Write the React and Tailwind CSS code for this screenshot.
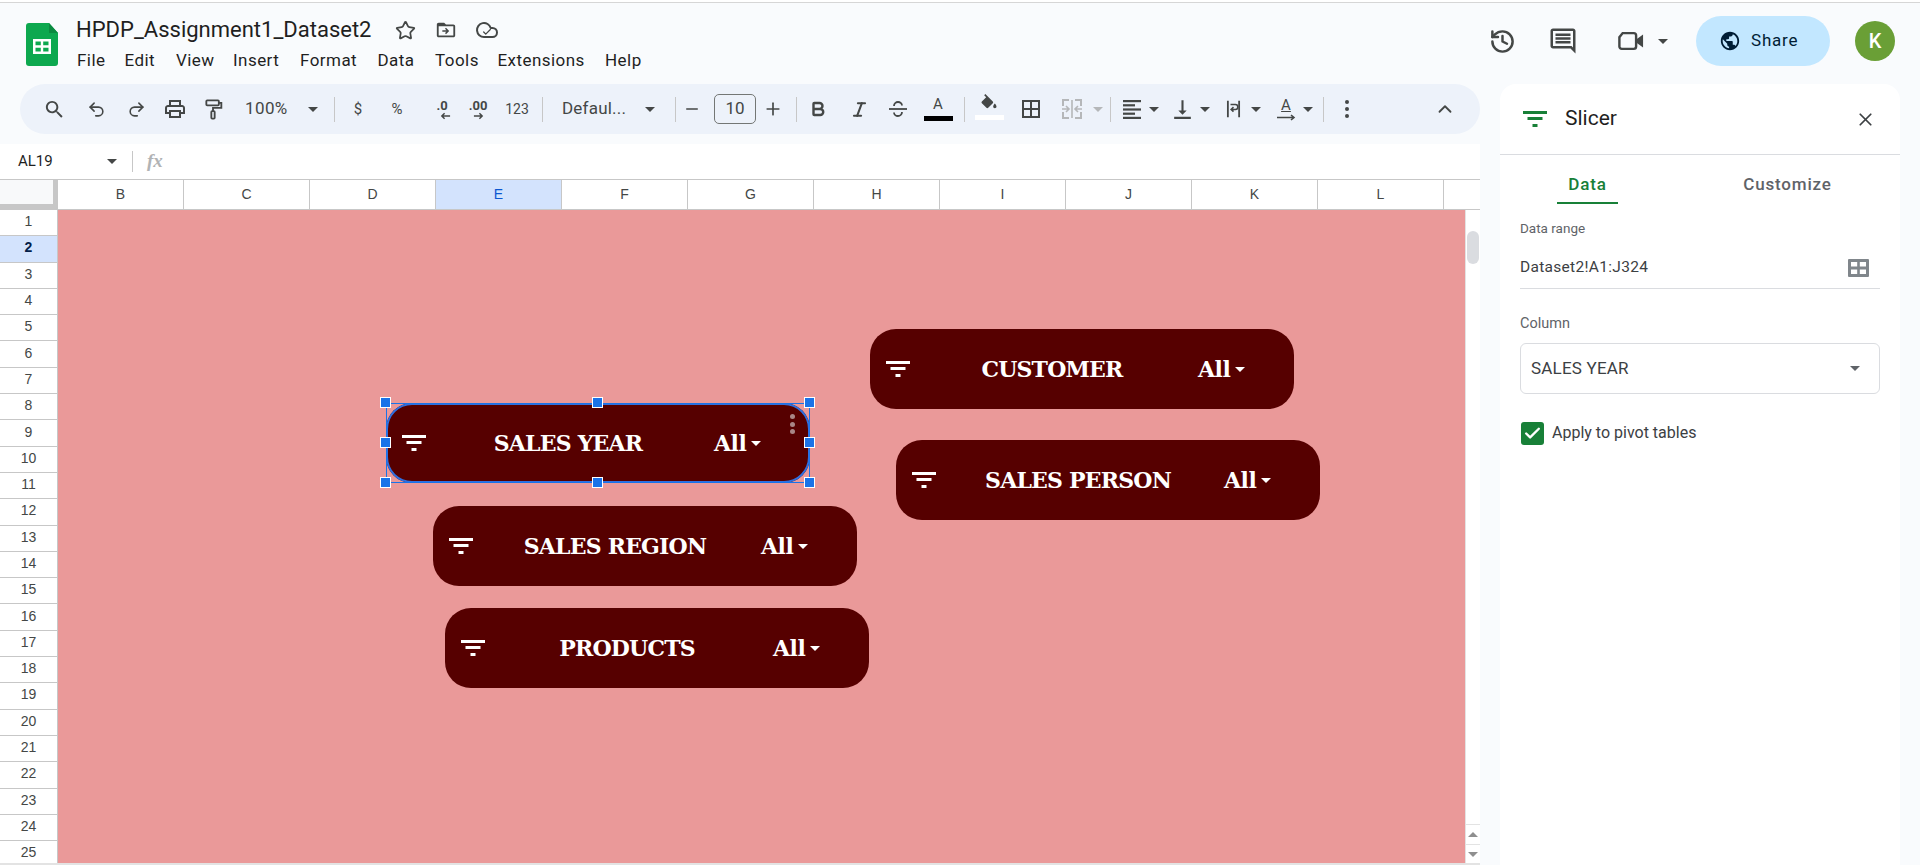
import React from "react";
import {
  Undo2,
  Redo2,
  Star,
  Cloud,
  ChevronUp,
  X,
  Check,
  History,
  Italic,
  Bold,
  Minus,
  Plus,
} from "lucide-react";

const ROBOTO = "font-['Roboto',sans-serif]";
const ARIAL = "font-['Liberation_Sans',Arial,sans-serif]";

const Caret = ({ className = "", color = "#444746" }) => (
  <svg width="10" height="5" viewBox="0 0 10 5" className={`shrink-0 ${className}`}>
    <path d="M0 0h10L5 5z" fill={color} />
  </svg>
);

const Sep = ({ className = "" }) => <div className={`w-px h-[25px] bg-[#c7c7c7] shrink-0 ${className}`} />;

const Slot = ({ className = "w-9", children }) => (
  <div className={`h-9 flex items-center justify-center shrink-0 text-[#444746] ${className}`}>{children}</div>
);

const Mat = ({ size = 24, d, fill = "#444746", children }) => (
  <svg width={size} height={size} viewBox="0 0 24 24" fill={fill}>
    {d && <path d={d} />}
    {children}
  </svg>
);

const FilterBars = ({ color, className = "" }) => (
  <svg width="24" height="16" viewBox="0 0 24 16" className={`shrink-0 ${className}`}>
    <rect x="0" y="0" width="24" height="3" fill={color} />
    <rect x="4.5" y="6" width="15" height="3" fill={color} />
    <rect x="9.5" y="13" width="5" height="3" fill={color} />
  </svg>
);

const BORDER_ALL = "M3 3v18h18V3H3zm8 16H5v-6h6v6zm0-8H5V5h6v6zm8 8h-6v-6h6v6zm0-8h-6V5h6v6z";

const MENU = [
  ["File", "w-[47.5px]"],
  ["Edit", "w-[51.5px]"],
  ["View", "w-[57px]"],
  ["Insert", "w-[67px]"],
  ["Format", "w-[77.5px]"],
  ["Data", "w-[57.5px]"],
  ["Tools", "w-[62.5px]"],
  ["Extensions", "w-[107.5px]"],
  ["Help", "w-[40px]"],
];

const COLUMNS = ["B", "C", "D", "E", "F", "G", "H", "I", "J", "K", "L"];
const ROWS = Array.from({ length: 25 }, (_, i) => i + 1);

const Header = () => (
  <div className="h-[82px] flex shrink-0 border-t border-[#d6d6d6] relative">
    {/* Logo */}
    <svg width="32" height="43" viewBox="0 0 32 43" className="ml-[26px] mt-[20px] shrink-0">
      <path d="M3 0h20l9 10v30a3 3 0 0 1-3 3H3a3 3 0 0 1-3-3V3a3 3 0 0 1 3-3z" fill="#0da84f" />
      <path d="M23 0l9 10h-9z" fill="#0b8a40" />
      <path d="M7 16h18v15H7zM9.500 18.500v3.800h5.300v-3.800zM17.200 18.500v3.800h5.300v-3.800zM9.500 24.700v3.800h5.300v-3.800zM17.200 24.700v3.800h5.300v-3.800z" fill="#fff" fillRule="evenodd" />
    </svg>
    <div className="ml-[19px] flex flex-col">
      <div className="flex items-center h-[24px] mt-[15px]">
        <span className={`${ROBOTO} text-[22px] leading-[24px] text-[#1f1f1f] w-[293px] -ml-px whitespace-nowrap`}>
          HPDP_Assignment1_Dataset2
        </span>
        <Star size={21} strokeWidth={2} className="ml-[26px] text-[#444746]" />
        <svg width="22" height="22" viewBox="0 0 24 24" fill="#444746" className="ml-[19px]">
          <path d="M20 6h-8l-2-2H4c-1.100 0-2 .9-2 2v12c0 1.100.9 2 2 2h16c1.100 0 2-.9 2-2V8c0-1.100-.9-2-2-2zm0 12H4V8h16v10z" />
          <path d="M12 9.500l3.500 3.500-3.500 3.500-1.100-1.100 1.600-1.600H8v-1.600h4.500l-1.600-1.600z" />
        </svg>
        <div className="ml-[18px] relative w-[24px] h-[24px]">
          <Cloud size={24} strokeWidth={2} className="text-[#444746]" />
          <Check size={10} strokeWidth={3} className="text-[#444746] absolute left-[7px] top-[9px]" />
        </div>
      </div>
      <div className={`${ROBOTO} flex mt-[7px] text-[17px] leading-[22px] text-[#1f1f1f]`}>
        {MENU.map(([label, w]) => (
          <span key={label} className={`${w} whitespace-nowrap tracking-[0.45px]`}>
            {label}
          </span>
        ))}
      </div>
    </div>

    {/* Right side actions */}
    <div className="ml-auto flex items-center h-[50px] mt-[13px]">
      <History size={27} strokeWidth={2.2} className="text-[#444746]" />
      <div className="ml-[32px]">
        <Mat size={30} d="M20 17.170L18.830 16H4V4h16v13.170zM20 2H4c-1.100 0-2 .9-2 2v12c0 1.100.9 2 2 2h14l4 4V4c0-1.100-.9-2-2-2z M6 12h12v2H6z M6 9h12v2H6z M6 6h12v2H6z" />
      </div>
      <svg width="26" height="20" viewBox="0 0 28 20" className="ml-[40px]" fill="none">
        <path d="M5 1.500h12a2.500 2.500 0 0 1 2.500 2.500v12a2.500 2.500 0 0 1-2.500 2.500H4A2.500 2.500 0 0 1 1.500 16V6z" stroke="#444746" strokeWidth="2.600" />
        <path d="M20 8l7-5v14l-7-5z" fill="#444746" />
      </svg>
      <Caret className="ml-[14px]" />
      <button className={`${ROBOTO} ml-[28px] w-[134px] h-[50px] rounded-full bg-[#c2e7ff] flex items-center pl-[23px] text-[#001d35]`}>
        <Mat size={22} fill="#001d35" d="M12 2C6.480 2 2 6.480 2 12s4.480 10 10 10 10-4.480 10-10S17.520 2 12 2zm-1 17.930c-3.950-.49-7-3.850-7-7.930 0-.62.08-1.210.21-1.790L9 15v1c0 1.100.9 2 2 2v1.930zm6.900-2.540c-.26-.81-1-1.390-1.900-1.390h-1v-3c0-.55-.45-1-1-1H8v-2h2c.55 0 1-.45 1-1V7h2c1.100 0 2-.9 2-2v-.41c2.930 1.190 5 4.060 5 7.410 0 2.080-.8 3.970-2.100 5.390z" />
        <span className="ml-[10px] text-[17px] tracking-[0.8px]">Share</span>
      </button>
      <div className={`${ROBOTO} ml-[25px] mr-[25px] w-10 h-10 rounded-full bg-[#6a9f36] text-white text-[20px] font-medium flex items-center justify-center`}>
        K
      </div>
    </div>
  </div>
);

const Toolbar = () => (
  <div className={`${ROBOTO} ml-5 h-[50px] rounded-[25px] bg-[#edf2fa] flex items-center text-[#444746]`}>
    <Slot className="w-9 ml-4">
      <Mat size={23} d="M15.500 14h-.79l-.28-.27C15.410 12.590 16 11.110 16 9.500 16 5.910 13.090 3 9.500 3S3 5.910 3 9.500 5.910 16 9.500 16c1.610 0 3.090-.59 4.230-1.570l.27.28v.79l5 4.990L20.490 19l-4.990-5zm-6 0C7.010 14 5 11.990 5 9.500S7.010 5 9.500 5 14 7.010 14 9.500 11.990 14 9.500 14z" />
    </Slot>
    <Slot className="w-9 ml-[6px]"><Undo2 size={19} strokeWidth={2} /></Slot>
    <Slot className="w-9 ml-[4px]"><Redo2 size={19} strokeWidth={2} /></Slot>
    <Slot className="w-9 ml-[3px]">
      <Mat size={24} d="M19 8h-1V3H6v5H5c-1.660 0-3 1.340-3 3v6h4v4h12v-4h4v-6c0-1.660-1.340-3-3-3zM8 5h8v3H8V5zm8 12v2H8v-4h8v2zm2-2v-2H6v2H4v-4c0-.55.45-1 1-1h14c.55 0 1 .45 1 1v4h-2z" />
    </Slot>
    <Slot className="w-9 ml-[2px]">
      <svg width="20" height="23" viewBox="0 0 24 26" fill="none" stroke="#444746" strokeWidth="2.200">
        <rect x="4" y="2" width="15" height="6" rx="1" />
        <path d="M19 5h3v6H12v4" />
        <rect x="10" y="15" width="4" height="9" rx="1" />
      </svg>
    </Slot>
    <span className="ml-[14px] w-[46px] text-[17px] tracking-[0.4px] whitespace-nowrap">100%</span>
    <Caret className="ml-[17px]" />
    <Sep className="ml-[16px]" />
    <Slot className="w-9 ml-[5px] text-[15px]">$</Slot>
    <Slot className="w-9 ml-[3px] text-[15px]">%</Slot>
    <Slot className="w-9 ml-[9px]">
      <div className="flex flex-col items-center leading-none">
        <span className="text-[13px] font-bold leading-[13px]">.0</span>
        <svg width="11" height="8" viewBox="0 0 12 8" fill="none" stroke="#444746" strokeWidth="1.600" className="ml-[6px]"><path d="M11 4H2M5 1L2 4l3 3" /></svg>
      </div>
    </Slot>
    <Slot className="w-9">
      <div className="flex flex-col items-center leading-none">
        <span className="text-[13px] font-bold leading-[13px]">.00</span>
        <svg width="11" height="8" viewBox="0 0 12 8" fill="none" stroke="#444746" strokeWidth="1.600"><path d="M1 4h9M7 1l3 3-3 3" /></svg>
      </div>
    </Slot>
    <Slot className="w-9 ml-[3px] text-[14px]">123</Slot>
    <Sep className="ml-[7px]" />
    <span className="ml-[19px] w-[66px] text-[17px] whitespace-nowrap tracking-[0.2px]">Defaul...</span>
    <Caret className="ml-[17px]" />
    <Sep className="ml-[20px]" />
    <Slot className="w-8"><Minus size={18} strokeWidth={2} /></Slot>
    <div className="ml-[6px] w-[42px] h-[30px] rounded-[5px] border border-[#747775] flex items-center justify-center text-[17px] text-[#444746]">10</div>
    <Slot className="w-8 ml-[1px]"><Plus size={20} strokeWidth={2} /></Slot>
    <Sep className="ml-[7px]" />
    <Slot className="w-9 ml-[3px]"><Bold size={18} strokeWidth={3.2} /></Slot>
    <Slot className="w-9 ml-[5px]"><Italic size={19} strokeWidth={2.6} /></Slot>
    <Slot className="w-9 ml-[3px]">
      <svg width="20" height="20" viewBox="0 0 20 20" fill="none" stroke="#444746" strokeWidth="1.800">
        <path d="M1 10h18" />
        <path d="M6 7c0-2.500 2-4 4-4s4 1.500 4 3.500" />
        <path d="M6 13.500c0 2 2 3.500 4 3.500s4-1.500 4-4" />
      </svg>
    </Slot>
    <Slot className="w-9 ml-[4px]">
      <div className="flex flex-col items-center">
        <span className="text-[15px] leading-[17px] mt-[-2px]">A</span>
        <div className="w-[29px] h-[5px] bg-black mt-[3px]" />
      </div>
    </Slot>
    <Sep className="ml-[8px]" />
    <Slot className="w-9 ml-[6px]">
      <div className="flex flex-col items-center mt-[-4px]">
        <Mat size={20} d="M16.560 8.940L7.620 0 6.210 1.410l2.380 2.380-5.150 5.150c-.59.59-.59 1.540 0 2.120l5.500 5.500c.59.59 1.530.59 2.120 0l5.500-5.500c.59-.58.59-1.530 0-2.120zM19 11.500s-2 2.170-2 3.500c0 1.100.9 2 2 2s2-.9 2-2c0-1.330-2-3.500-2-3.500z" />
        <div className="w-[29px] h-[5px] bg-white mt-[1px]" />
      </div>
    </Slot>
    <Slot className="w-9 ml-[6px]"><Mat size={24} d={BORDER_ALL} /></Slot>
    <Slot className="w-9 ml-[5px]">
      <svg width="22" height="22" viewBox="0 0 22 22" fill="none" stroke="#b5b7b9" strokeWidth="2">
        <path d="M2 8V2h6M14 2h6v6M20 14v6h-6M8 20H2v-6" />
        <path d="M1 11h7M5 8l3 3-3 3M21 11h-7M17 8l-3 3 3 3M11 2v18" strokeWidth="1.600" />
      </svg>
    </Slot>
    <Caret className="ml-[3px]" color="#b5b7b9" />
    <Sep className="ml-[7px]" />
    <Slot className="w-[30px] ml-[6px]">
      <svg width="20" height="20" viewBox="0 0 20 20" fill="#444746">
        <rect x="1" y="1" width="18" height="2.200" />
        <rect x="1" y="5.200" width="12" height="2.200" />
        <rect x="1" y="9.400" width="18" height="2.200" />
        <rect x="1" y="13.600" width="12" height="2.200" />
        <rect x="1" y="17.800" width="18" height="2.200" />
      </svg>
    </Slot>
    <Caret className="ml-[2px]" />
    <Slot className="w-[30px] ml-[8px]">
      <Mat size={25} d="M16 13h-3V3h-2v10H8l4 4 4-4zM4 19v2h16v-2H4z" />
    </Slot>
    <Caret className="ml-[3px]" />
    <Slot className="w-[30px] ml-[8px]">
      <svg width="15" height="18" viewBox="0 0 18 24" fill="none" stroke="#444746" strokeWidth="2.400">
        <path d="M1.500 1v22M16.500 1v22" />
        <path d="M5 6h6.500a3 3 0 0 1 0 6.500H6M9 9.500l-3.200 3 3.200 3" strokeWidth="2" />
      </svg>
    </Slot>
    <Caret className="ml-[3px]" />
    <Slot className="w-[30px] ml-[10px]">
      <div className="flex flex-col items-center">
        <span className="text-[15px] leading-[16px] underline underline-offset-1">A</span>
        <svg width="20" height="7" viewBox="0 0 20 7" fill="none" stroke="#444746" strokeWidth="1.600" className="mt-[1px]"><path d="M1 3.500h17M15 1l3 2.500L15 6" /></svg>
      </div>
    </Slot>
    <Caret className="ml-[2px]" />
    <Sep className="ml-[10px]" />
    <Slot className="w-9 ml-[5px]">
      <svg width="4" height="18" viewBox="0 0 4 18" fill="#444746"><circle cx="2" cy="2" r="2" /><circle cx="2" cy="9" r="2" /><circle cx="2" cy="16" r="2" /></svg>
    </Slot>
    <Slot className="w-9 ml-auto mr-[17px]"><ChevronUp size={22} strokeWidth={2} /></Slot>
  </div>
);

const FormulaBar = () => (
  <div className={`${ROBOTO} mt-[10px] h-[36px] bg-white flex items-center border-b border-[#c7c7c7] text-[#1f1f1f]`}>
    <span className="ml-[18px] w-[89px] text-[15px]">AL19</span>
    <Caret />
    <div className="ml-[15px] w-px h-[21px] bg-[#c7c7c7]" />
    <span className="ml-[14px] font-['Liberation_Serif',serif] italic font-bold text-[19px] text-[#b1b3b5]">fx</span>
  </div>
);

const ColumnHeaders = () => (
  <div className={`${ARIAL} h-[30px] flex border-b border-[#c7c7c7] text-[14px] text-[#444746] bg-white`}>
    <div className="w-[58px] shrink-0 bg-[#f8f9fa] border-r-[5px] border-b-[5px] border-[#c7c7c7]" />
    {COLUMNS.map((c) => (
      <div
        key={c}
        className={`w-[126px] shrink-0 flex items-center justify-center border-r border-[#c7c7c7] ${c === "E" ? "bg-[#d3e3fd] text-[#0b57d0]" : ""}`}
      >
        {c}
      </div>
    ))}
  </div>
);

const RowHeaders = () => (
  <div className={`${ARIAL} w-[58px] shrink-0 border-r border-[#c7c7c7] text-[14px] text-[#444746] bg-white overflow-hidden`}>
    {ROWS.map((r) => (
      <div
        key={r}
        className={`h-[26.3px] pb-[2px] flex items-center justify-center border-b border-[#c7c7c7] ${r === 2 ? "bg-[#d3e3fd] text-[#041e49] font-bold" : ""}`}
      >
        {r}
      </div>
    ))}
  </div>
);

const Slicer = ({ label, className = "" }) => (
  <div className={`absolute w-[424px] h-[80px] rounded-[26px] bg-[#560000] flex items-center pl-4 pr-[49px] text-white ${className}`}>
    <FilterBars color="#fff" />
    <div className="flex-1 text-center font-['DejaVu_Serif',serif] font-bold text-[22px] tracking-[-0.8px] whitespace-nowrap">{label}</div>
    <div className="ml-1 w-[47px] flex items-center font-['DejaVu_Serif',serif] font-bold text-[22px] tracking-[-0.5px]">
      <span className="w-[37px]">All</span>
      <Caret color="#fff" />
    </div>
  </div>
);

// selection box of the active slicer
const Handle = ({ className }) => (
  <div className={`absolute w-[11px] h-[11px] bg-[#1a73e8] border border-white ${className}`} />
);

const Canvas = () => (
  <div className="relative flex-1 bg-[#ea9999] overflow-hidden">
    <Slicer label="CUSTOMER" className="left-[812px] top-[119px]" />
    <Slicer label="SALES PERSON" className="left-[838px] top-[230px]" />
    <Slicer label="SALES REGION" className="left-[375px] top-[296px]" />
    <Slicer label="PRODUCTS" className="left-[387px] top-[398px]" />

    <Slicer label="SALES YEAR" className="left-[328px] top-[193px] ring-2 ring-inset ring-[#2f6fe0]" />
    <div className="absolute left-[328px] top-[193px] w-[424px] h-[80px] border border-[#1a73e8] pointer-events-none" />
    <div className="absolute left-[732px] top-[204px] flex flex-col gap-[2.500px]">
      <div className="w-[5px] h-[5px] rounded-full bg-[#a98686]" />
      <div className="w-[5px] h-[5px] rounded-full bg-[#a98686]" />
      <div className="w-[5px] h-[5px] rounded-full bg-[#a98686]" />
    </div>
    <Handle className="left-[322px] top-[187px]" />
    <Handle className="left-[534px] top-[187px]" />
    <Handle className="left-[746px] top-[187px]" />
    <Handle className="left-[322px] top-[227px]" />
    <Handle className="left-[746px] top-[227px]" />
    <Handle className="left-[322px] top-[267px]" />
    <Handle className="left-[534px] top-[267px]" />
    <Handle className="left-[746px] top-[267px]" />
  </div>
);

const Scrollbar = () => (
  <div className="w-[15px] shrink-0 bg-white border-l border-[#e3e3e3] flex flex-col">
    <div className="mt-[21px] mx-auto w-[12px] h-[33px] rounded-full bg-[#dadce0]" />
    <div className="mt-auto h-[20px] border-t border-[#e3e3e3] flex items-center justify-center">
      <svg width="10" height="5" viewBox="0 0 10 5"><path d="M0 5h10L5 0z" fill="#8f8f8f" /></svg>
    </div>
    <div className="h-[19px] border-t border-[#e3e3e3] flex items-center justify-center">
      <Caret color="#8f8f8f" />
    </div>
  </div>
);

const SidePanel = () => (
  <div className={`${ROBOTO} w-[400px] ml-5 bg-white rounded-t-[16px] flex flex-col shrink-0`}>
    <div className="h-[71px] shrink-0 flex items-center border-b border-[#dadce0] pl-[23px] pr-[24px]">
      <FilterBars color="#188038" />
      <span className="ml-[18px] text-[21px] text-[#1f1f1f]">Slicer</span>
      <X size={21} strokeWidth={2} className="ml-auto text-[#3c4043]" />
    </div>
    <div className="h-[49px] shrink-0 flex text-[17px] tracking-[0.8px]">
      <div className="ml-[57px] w-[61px] h-[49px] border-b-[2px] border-[#188038] text-[#188038] font-medium flex justify-center pt-[18px] leading-[22px]">
        Data
      </div>
      <div className="ml-[125px] w-[89px] h-[49px] text-[#5f6368] font-medium flex justify-center pt-[18px] leading-[22px] whitespace-nowrap">
        Customize
      </div>
    </div>
    <div className="px-5 mt-[15px] flex flex-col">
      <span className="text-[13.500px] leading-[18px] text-[#5f6368]">Data range</span>
      <div className="mt-[13px] h-[39px] pb-[2px] flex items-center justify-between border-b border-[#dadce0]">
        <span className="text-[15.500px] text-[#3c4043] tracking-[0.3px]">Dataset2!A1:J324</span>
        <svg width="21" height="18" viewBox="0 0 21 18" className="mr-[11px]" fill="#80868b">
          <path d="M0 1a1 1 0 0 1 1-1h19a1 1 0 0 1 1 1v16a1 1 0 0 1-1 1H1a1 1 0 0 1-1-1zM3 3v4.500h6.200V3zM11.800 3v4.500H18V3zM3 10.500V15h6.200v-4.500zM11.800 10.500V15H18v-4.500z" fillRule="evenodd" />
        </svg>
      </div>
      <span className="mt-[25px] text-[14.500px] leading-[20px] text-[#5f6368]">Column</span>
      <div className="mt-[9px] h-[51px] rounded-[6px] border border-[#dadce0] flex items-center justify-between pl-[10px] pr-[14px]">
        <span className="text-[17px] tracking-[0.2px] text-[#3c4043]">SALES YEAR</span>
        <Caret color="#5f6368" className="mr-[5px]" />
      </div>
      <div className="mt-[27px] flex items-center">
        <div className="ml-[1px] w-[23px] h-[23px] rounded-[3px] bg-[#188038] flex items-center justify-center">
          <Check size={19} strokeWidth={3} className="text-white" />
        </div>
        <span className="ml-[8px] text-[16px] text-[#3c4043]">Apply to pivot tables</span>
      </div>
    </div>
  </div>
);

const App = () => {
  return (
    <div className="w-[1920px] h-[865px] overflow-hidden bg-[#f9fbfd] flex flex-col">
      <div className="h-[2px] shrink-0 bg-white" />
      <Header />
      <div className="flex flex-1 min-h-0">
        <div className="w-[1480px] shrink-0 flex flex-col">
          <Toolbar />
          <FormulaBar />
          <ColumnHeaders />
          <div className="flex h-[653px]">
            <RowHeaders />
            <Canvas />
            <Scrollbar />
          </div>
          <div className="h-[2px] bg-[#e3e3e3]" />
        </div>
        <SidePanel />
      </div>
    </div>
  );
};

export default App;
